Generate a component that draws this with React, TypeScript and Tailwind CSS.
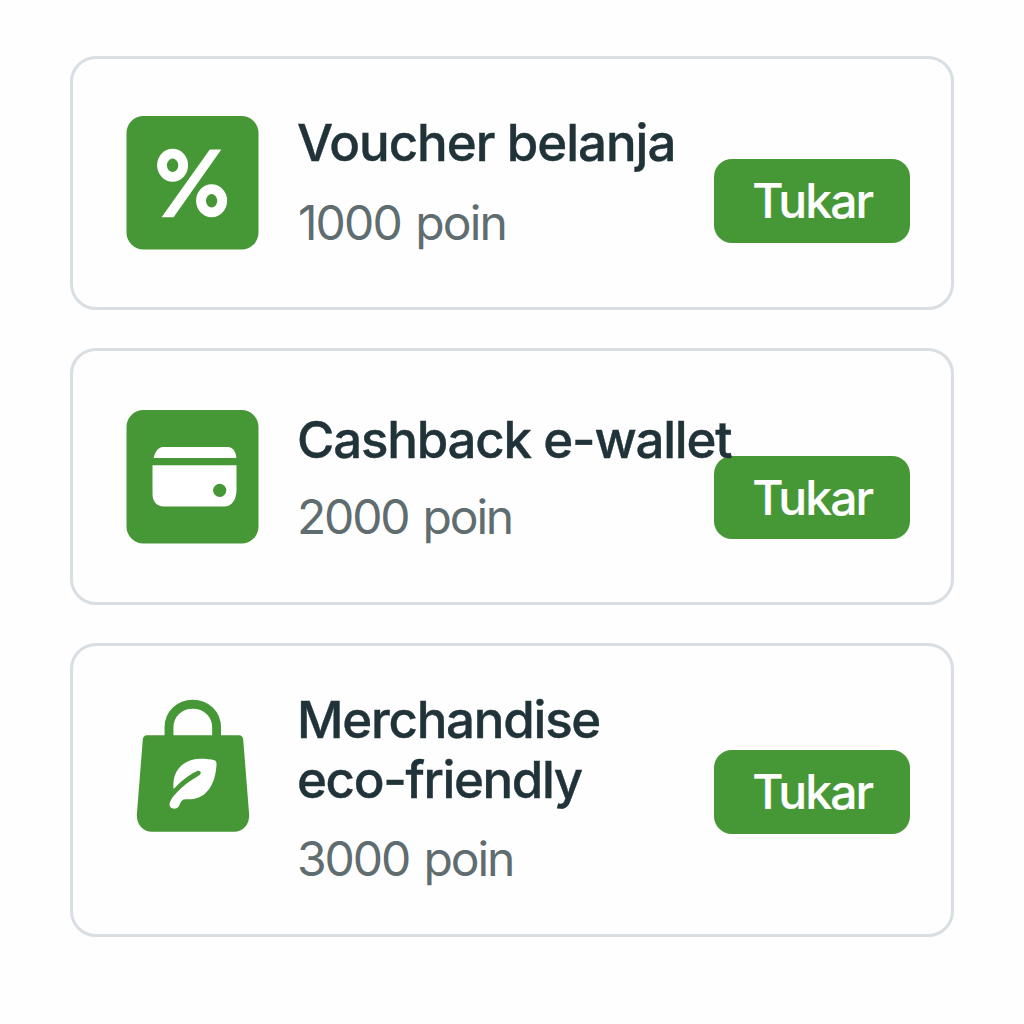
import type { ReactNode } from "react";

function PercentIcon() {
  return (
    <svg viewBox="0 0 133 134" className="h-[134px] w-[133px]" fill="none">
      <rect x="0.5" y="0" width="132" height="133.5" rx="17" fill="#469735" />
      <ellipse cx="46.6" cy="49.3" rx="10.6" ry="11.6" stroke="#fff" strokeWidth="9.8" />
      <ellipse cx="85.6" cy="84.8" rx="10.6" ry="11.6" stroke="#fff" strokeWidth="9.8" />
      <path d="M83.8 33.5H95.3L47.6 101.3H35.6Z" fill="#fff" />
    </svg>
  );
}

function WalletIcon() {
  return (
    <svg viewBox="0 0 133 134" className="h-[134px] w-[133px]" fill="none">
      <rect x="0.5" y="0" width="132" height="133.5" rx="17" fill="#469735" />
      <path d="M27.6 48C29 42 32 37 37 37H102C107 37 110 42 110.4 48Z" fill="#fff" />
      <path
        d="M26.5 55.2H110.5V80C110.5 90 105.5 96.6 98 96.6H38C30.5 96.6 26.5 91 26.5 84Z"
        fill="#fff"
      />
      <circle cx="93.7" cy="80.3" r="6.6" fill="#469735" />
    </svg>
  );
}

function BagIcon() {
  return (
    <svg viewBox="0 0 133 134" className="h-[134px] w-[133px]" fill="none">
      <path
        d="M43 38V28.5C43 15 53.5 5.2 66.8 5.2S90.6 15 90.6 28.5V38"
        stroke="#469735"
        strokeWidth="8.9"
      />
      <path
        d="M21 36.3H113C115.5 36.3 117 38 117.2 40.5L123.1 115C123.8 125 117.5 132.8 108 132.8H26C16.5 132.8 10.2 125 10.9 115L16.8 40.5C17 38 18.5 36.3 21 36.3Z"
        fill="#469735"
      />
      <path
        d="M47.6 90C45.5 71 58 59.8 75 59.8C80.5 59.8 85 60.4 88.3 61.2C90.2 61.8 90.6 63.3 90.5 65.5C89.5 86 80 99.3 65 100.2H60C52.8 100.4 55.2 107.3 50.5 109.3C46.5 110.6 43.5 108.5 43.5 105.5C43.8 99.5 52.5 91.5 60 85C65 81 70 78.5 73.3 76.2C76.3 74 74.3 70.8 70.8 72.2C62 76 54.5 83 47.6 90Z"
        fill="#fff"
      />
    </svg>
  );
}

interface RewardProps {
  icon: ReactNode;
  title: ReactNode;
  points: string;
  card: string;
  iconPad: string;
  textPad: string;
  subtitle: string;
  buttonPad: string;
}

const rewards: RewardProps[] = [
  {
    icon: <PercentIcon />,
    title: <span className="tracking-[-1.05px]">Voucher belanja</span>,
    points: "1000 poin",
    card: "h-[254px]",
    iconPad: "pt-[57px]",
    textPad: "pt-[54px]",
    subtitle: "mt-5 pl-px tracking-[-1.9px]",
    buttonPad: "pt-[100px]",
  },
  {
    icon: <WalletIcon />,
    title: <span className="tracking-[-1.2px]">Cashback e-wallet</span>,
    points: "2000 poin",
    card: "mt-[38px] h-[257px]",
    iconPad: "pt-[59px]",
    textPad: "pt-[59px]",
    subtitle: "mt-[17px] tracking-[-2.2px]",
    buttonPad: "pt-[104.5px]",
  },
  {
    icon: <BagIcon />,
    title: (
      <>
        <span className="tracking-[-1.25px]">Merchandise</span>
        <br />
        <span className="tracking-[-1.35px]">eco-friendly</span>
      </>
    ),
    points: "3000 poin",
    card: "mt-[38px] h-[294px]",
    iconPad: "pt-[53px]",
    textPad: "pt-[44px]",
    subtitle: "mt-[19px] tracking-[-2.1px]",
    buttonPad: "pt-[104px]",
  },
];

function RewardCard({ icon, title, points, card, iconPad, textPad, subtitle, buttonPad }: RewardProps) {
  return (
    <article className={`flex items-start rounded-[26px] border-3 border-[#d9dee2] pl-[53px] ${card}`}>
      <div className={`w-[171px] shrink-0 ${iconPad}`}>{icon}</div>
      <div className={`relative z-10 w-[417px] shrink-0 whitespace-nowrap ${textPad}`}>
        <h2 className="text-[51px] leading-[60px] font-medium text-[#203339] [-webkit-text-stroke:0.4px_#203339]">
          {title}
        </h2>
        <p className={`text-[48px] leading-[60px] font-normal [word-spacing:3px] text-[#5f6c70] ${subtitle}`}>
          {points}
        </p>
      </div>
      <div className={`shrink-0 ${buttonPad}`}>
        <button className="flex h-[83.5px] w-[195.5px] items-center justify-center rounded-[18px] bg-[#469735] pt-px pl-px text-[48px] leading-[60px] font-medium tracking-[-1.9px] text-white [-webkit-text-stroke:0.2px_#fff]">
          Tukar
        </button>
      </div>
    </article>
  );
}

export default function App() {
  return (
    <main className="h-[1024px] w-[1024px] overflow-hidden bg-[#fefefe] pt-14 pl-[70px] font-['Inter',sans-serif]">
      <div className="w-[884px]">
        {rewards.map((r) => (
          <RewardCard key={r.points} {...r} />
        ))}
      </div>
    </main>
  );
}
